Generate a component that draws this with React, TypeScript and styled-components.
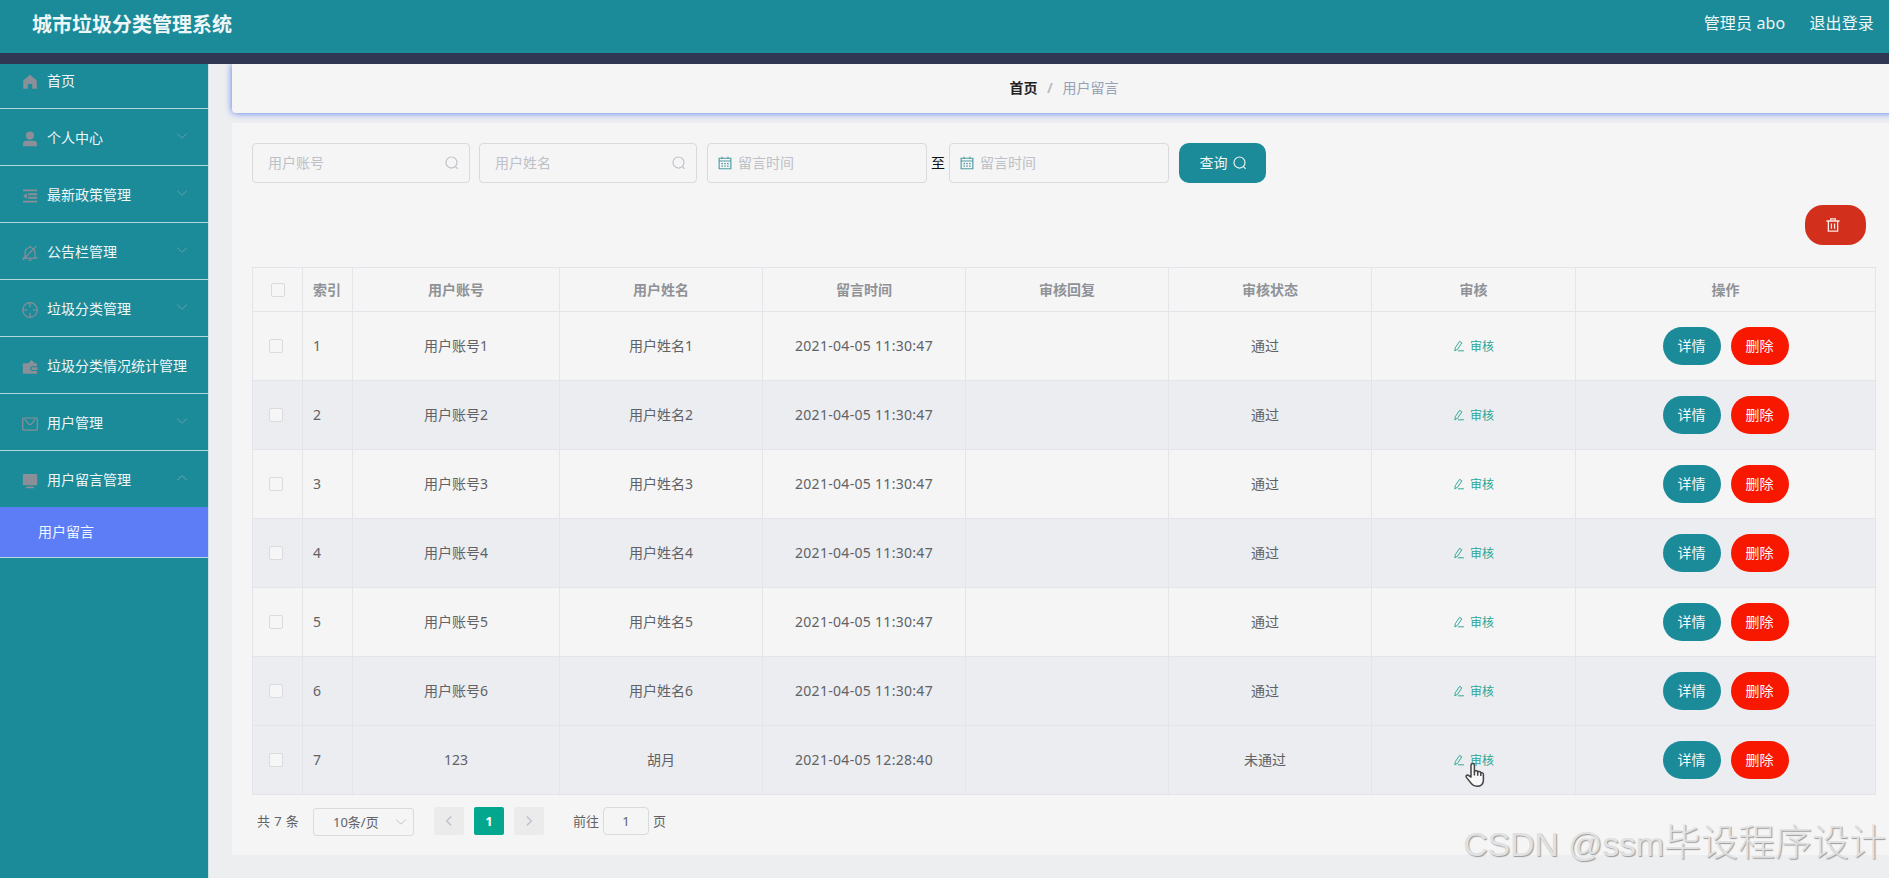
import React from "react";
import styled, { createGlobalStyle, css } from "styled-components";

const Global = createGlobalStyle`
  * { box-sizing: border-box; }
  body { margin: 0; overflow: hidden; background: #eceef0; }
  body, button, input { font-family: "Noto Sans", "Noto Sans CJK SC", sans-serif; font-size: 14px; }
`;

const Page = styled.div`
  position: relative;
  display: flex;
  flex-direction: column;
  width: 100%;
  height: 878px;
  overflow: hidden;
  color: #606266;
`;

const Header = styled.header`
  display: flex;
  flex: none;
  justify-content: space-between;
  height: 64px;
  padding: 0 15px 5px 32px;
  background: #1b8a99;
  border-bottom: 11px solid #303753;
  color: #eef7f8;
`;
const Title = styled.h1`
  margin: 0;
  font-size: 20px;
  font-weight: 700;
  line-height: 49px;
`;
const Account = styled.div`
  display: flex;
  gap: 24px;
  font-size: 16px;
  line-height: 46px;
  letter-spacing: 0.15px;
`;

const Body = styled.div`
  display: flex;
  flex: 1;
  min-height: 0;
  overflow: hidden;
`;
const Sidebar = styled.nav`
  flex: none;
  width: 209px;
  overflow: hidden;
  background: #1b8a99;
  border-right: 1px solid #cfe0e4;
`;
const Menu = styled.ul`
  margin: -12px 0 0;
  padding: 0;
  list-style: none;
`;
const MenuGroup = styled.li`
  border-bottom: 1px solid #b5d8dd;
`;
const MenuItem = styled.div`
  display: flex;
  align-items: center;
  height: 56px;
  padding: 0 20px 0 22px;
  color: #eef7f8;
  white-space: nowrap;
  > svg:first-child { flex: none; margin: 4px 9px 0 0; color: #8b8f97; }
`;
const Arrow = styled.svg`
  width: 12px;
  height: 12px;
  margin: -2px 0 0 auto;
  color: #519ba6;
`;
const SubItem = styled.div`
  height: 50px;
  padding-left: 38px;
  line-height: 49px;
  color: #f2f5ff;
  background: #5c7df5;
`;

const Main = styled.main`
  flex: 1;
  min-width: 0;
  padding-left: 23px;
`;
const Crumbs = styled.div`
  display: flex;
  justify-content: center;
  height: 49px;
  margin-right: -7px;
  line-height: 47px;
  border-radius: 0 0 4px 4px;
  background: #f5f5f5;
  box-shadow: 0 0 7px #5478f0;
  color: #97a2b6;
  b { color: #222; font-weight: 700; }
  span { margin: 0 9.5px; color: #b8bcc6; font-weight: 700; }
`;
const Card = styled.section`
  position: relative;
  height: 732px;
  margin-top: 10px;
  padding: 20px 13px 0 20px;
  background: #f5f5f5;
`;
const Filters = styled.div`
  display: flex;
  align-items: center;
  height: 40px;
`;
const Label = styled.span`
  padding-bottom: 2px;
`;
const Field = styled.div<{ $date?: boolean; $gap?: number }>`
  display: flex;
  align-items: center;
  justify-content: space-between;
  width: 218px;
  height: 40px;
  margin-right: ${(p) => p.$gap ?? 10}px;
  padding: 0 10px 0 15px;
  border: 1px solid #d8dadd;
  border-radius: 4px;
  color: #bcc0c8;
  ${(p) =>
    p.$date &&
    css`
      width: 220px;
      padding: 0 10px;
      justify-content: flex-start;
      gap: 6px;
      svg { color: #4d9ca5; }
    `}
`;
const Until = styled.span`
  width: 18px;
  padding-bottom: 2px;
  color: #111;
`;
const SearchButton = styled.button`
  display: flex;
  align-items: center;
  justify-content: center;
  gap: 5px;
  width: 87px;
  height: 40px;
  padding: 0 0 0 1px;
  border: 0;
  border-radius: 10px;
  color: #eef7f8;
  background: #1b8a99;
`;
const Toolbar = styled.div`
  display: flex;
  justify-content: flex-end;
  padding: 22px 10px;
`;
const BulkDelete = styled.button`
  display: flex;
  align-items: center;
  justify-content: center;
  width: 61px;
  height: 40px;
  padding: 0 5px 0 0;
  border: 0;
  border-radius: 18px;
  color: #fbe9e5;
  background: #d22f1d;
`;

const Table = styled.div`
  width: 1624px;
  border: solid #e3e5ea;
  border-width: 1px 0 0 1px;
`;
const Row = styled.div<{ $head?: boolean; $shade?: boolean }>`
  display: grid;
  grid-template-columns: 50px 50px 207px 203px 203px 203px 203px 204px 300px;
  height: ${(p) => (p.$head ? 44 : 69)}px;
  background: ${(p) => (p.$shade ? "#ebedf1" : "transparent")};
  ${(p) => p.$head && css`color: #8f9297; font-weight: 700;`}
`;
const Cell = styled.div<{ $left?: number; $shift?: number }>`
  display: flex;
  align-items: center;
  justify-content: ${(p) => (p.$left ? "flex-start" : "center")};
  padding-left: ${(p) => p.$left ?? 0}px;
  padding-right: ${(p) => p.$shift ?? 0}px;
  border: solid #e3e5ea;
  border-width: 0 1px 1px 0;
`;
const TextCell = styled(Cell)`
  padding-bottom: 2px;
`;
const Time = styled.span`
  letter-spacing: 0.3px;
`;
const Check = styled.span`
  width: 14px;
  height: 14px;
  border: 1px solid #d9dbdf;
  border-radius: 2px;
  background: #f6f6f6;
`;
const Audit = styled.a`
  display: flex;
  align-items: center;
  gap: 5px;
  padding-bottom: 1px;
  font-size: 12px;
  color: #2ba694;
`;
const Pill = styled.button<{ $danger?: boolean }>`
  width: 58px;
  height: 38px;
  margin: 0 5px;
  padding: 0 0 2px;
  border: 0;
  border-radius: 19px;
  color: #f8f8f8;
  background: ${(p) => (p.$danger ? "#f81800" : "#1b8a99")};
`;

const Pager = styled.div`
  display: flex;
  align-items: center;
  height: 28px;
  margin: 12px 0 0 5px;
  font-size: 13px;
`;
const Total = styled.span`
  width: 56px;
  padding-bottom: 1px;
  white-space: nowrap;
  word-spacing: 0.8px;
`;
const PageSize = styled.div`
  display: flex;
  align-items: center;
  justify-content: space-between;
  width: 101px;
  height: 28px;
  margin: 2px 20px 0 0;
  padding: 0 6px 2px 19px;
  border: 1px solid #d8dadd;
  border-radius: 3px;
  svg { color: #c0c4cc; margin-top: 2px; }
`;
const PageButton = styled.span<{ $active?: boolean }>`
  display: flex;
  align-items: center;
  justify-content: center;
  width: 30px;
  height: 28px;
  margin-right: 10px;
  border-radius: 2px;
  font-weight: 700;
  color: ${(p) => (p.$active ? "#fff" : "#bfc3ca")};
  background: ${(p) => (p.$active ? "#03a78d" : "#ebebec")};
`;
const Jump = styled.div`
  display: flex;
  align-items: center;
  margin-left: 19px;
`;
const JumpInput = styled.span`
  width: 46px;
  height: 28px;
  margin: 0 4px 0 4px;
  border: 1px solid #d8dadd;
  border-radius: 4px;
  line-height: 26px;
  text-align: center;
`;

const Watermark = styled.div`
  position: absolute;
  right: 3px;
  bottom: 7px;
  font: 300 37px/54px "Liberation Sans", "Noto Sans CJK SC", sans-serif;
  color: #e0e1e2;
  text-shadow: 1px 1px 1px #9a9a9a;
  white-space: nowrap;
`;
const Latin = styled.span`
  font-size: 34px;
  letter-spacing: -0.2px;
`;
const Pointer = styled.svg`
  position: absolute;
  left: 1465px;
  top: 762px;
`;

const iconPaths: Record<string, React.ReactNode> = {
  home: <path fill="currentColor" stroke="none" d="M8 .8 1.200 6.600v8.200h4.600V10h4.400v4.800h4.600V6.600z" />,
  user: (
    <g fill="currentColor" stroke="none">
      <circle cx="8" cy="4.6" r="4.1" />
      <path d="M1 15.2v-2.400a3 3 0 0 1 3-3h8a3 3 0 0 1 3 3v2.400z" />
    </g>
  ),
  fold: (
    <>
      <path strokeWidth="1.9" d="M1 2.400h14M6.200 6.200H15M6.200 9.800H15M1 13.600h14" />
      <path fill="currentColor" stroke="none" d="M4.800 5v6L1.200 8z" />
    </>
  ),
  bell: <path strokeWidth="1.2" d="M3 13V7.500a5 5 0 0 1 10 0V13M.5 13.200h15M6.400 15.200h3.200M8 .5v2M14.200 1.300 1 14.800" />,
  aim: (
    <g strokeWidth="1.200">
      <circle cx="8" cy="8" r="7.300" />
      <path d="M8 1v4.200M8 10.800V15M1 8h4.200M10.800 8H15" />
    </g>
  ),
  wallet: (
    <path
      fill="currentColor"
      stroke="none"
      d="M.8 4.200h5.400L9.700 1l2.800 3.200H15v3h-4.500a2.400 2.400 0 0 0 0 4.800H15v2.700H.8zM10.600 8.300H15.400v2.600h-4.800a1.300 1.300 0 0 1 0-2.600z"
    />
  ),
  mail: (
    <g strokeWidth="1.200">
      <rect x=".7" y="2" width="14.600" height="12.200" rx="1" />
      <path d="m2.800 3.200 3.600 4.600q1.600 1.500 3.200 0l3.600-4.600" />
    </g>
  ),
  monitor: <path fill="currentColor" stroke="none" d="M1.800 1h12.400q1 0 1 1v9.200q0 1-1 1H1.800q-1 0-1-1V2q0-1 1-1zM5 13.600h6l1.300.9v.8H3.700v-.8z" />,
  search: (
    <>
      <circle cx="7.4" cy="7.5" r="6.300" />
      <path d="m12 12.200 2.400 2.600" />
    </>
  ),
  calendar: (
    <>
      <path strokeWidth="1.300" d="M1.300 2.600h13.400v12H1.300zM1.300 5.700h13.400M4.600.8v2.600M11.400.8v2.600" />
      <path strokeDasharray="1.800 1.400" d="M3.900 8.700h8.600M3.900 11.500h8.600" />
    </>
  ),
  trash: <path strokeWidth="1.500" d="M.5 3.400h15M2.700 3.400v11.600h10.600V3.400M5.400 3.200V1h5.200v2.200M6.200 6.200v6M9.800 6.200v6" />,
  edit: <path strokeWidth="1.300" d="m3.200 10 5.600-8.200 3 2-5.800 8.600-3.600 2zM6.600 14.400H14.500" />,
  down: <path d="m1.500 4.800 6.500 6 6.500-6" />,
  up: <path d="m1.500 11 6.500-6 6.500 6" />,
  left: <path strokeWidth="2" d="M10.900 2 5 8l5.900 6" />,
  right: <path strokeWidth="2" d="M5.100 2 11 8l-5.900 6" />,
};

function Icon({ name, size = 14 }: { name: string; size?: number }) {
  return (
    <svg width={size} height={size} viewBox="0 0 16 16" fill="none" stroke="currentColor" strokeWidth="1.3">
      {iconPaths[name]}
    </svg>
  );
}

const menu = [
  { icon: "home", label: "首页" },
  { icon: "user", label: "个人中心", arrow: "down" },
  { icon: "fold", label: "最新政策管理", arrow: "down" },
  { icon: "bell", label: "公告栏管理", arrow: "down" },
  { icon: "aim", label: "垃圾分类管理", arrow: "down" },
  { icon: "wallet", label: "垃圾分类情况统计管理" },
  { icon: "mail", label: "用户管理", arrow: "down" },
  { icon: "monitor", label: "用户留言管理", arrow: "up", child: "用户留言" },
];

const columns = ["用户账号", "用户姓名", "留言时间", "审核回复", "审核状态", "审核", "操作"];

const rows = [
  ...[1, 2, 3, 4, 5, 6].map((n) => ({
    account: `用户账号${n}`,
    name: `用户姓名${n}`,
    time: "2021-04-05 11:30:47",
    status: "通过",
  })),
  { account: "123", name: "胡月", time: "2021-04-05 12:28:40", status: "未通过" },
];

export default function App() {
  return (
    <Page>
      <Global />
      <Header>
        <Title>城市垃圾分类管理系统</Title>
        <Account>
          <span>管理员 abo</span>
          <span>退出登录</span>
        </Account>
      </Header>
      <Body>
        <Sidebar>
          <Menu>
            {menu.map((m) => (
              <MenuGroup key={m.label}>
                <MenuItem>
                  <Icon name={m.icon} size={16} />
                  {m.label}
                  {m.arrow && (
                    <Arrow viewBox="0 0 16 16" fill="none" stroke="currentColor" strokeWidth="1.4">
                      {iconPaths[m.arrow]}
                    </Arrow>
                  )}
                </MenuItem>
                {m.child && <SubItem>{m.child}</SubItem>}
              </MenuGroup>
            ))}
          </Menu>
        </Sidebar>
        <Main>
          <Crumbs>
            <b>首页</b>
            <span>/</span>
            用户留言
          </Crumbs>
          <Card>
            <Filters>
              <Field $gap={9}><Label>用户账号</Label><Icon name="search" /></Field>
              <Field><Label>用户姓名</Label><Icon name="search" /></Field>
              <Field $date $gap={4}><Icon name="calendar" /><Label>留言时间</Label></Field>
              <Until>至</Until>
              <Field $date><Icon name="calendar" /><Label>留言时间</Label></Field>
              <SearchButton><Label>查询</Label><Icon name="search" /></SearchButton>
            </Filters>
            <Toolbar>
              <BulkDelete><Icon name="trash" /></BulkDelete>
            </Toolbar>
            <Table>
              <Row $head>
                <Cell $left={18}><Check /></Cell>
                <TextCell $left={10}>索引</TextCell>
                {columns.map((c) => (
                  <TextCell key={c}>{c}</TextCell>
                ))}
              </Row>
              {rows.map((r, i) => (
                <Row key={i} $shade={i % 2 === 1 || i === rows.length - 1}>
                  <Cell $left={16}><Check /></Cell>
                  <TextCell $left={10}>{i + 1}</TextCell>
                  <TextCell>{r.account}</TextCell>
                  <TextCell>{r.name}</TextCell>
                  <TextCell><Time>{r.time}</Time></TextCell>
                  <Cell />
                  <TextCell $shift={10}>{r.status}</TextCell>
                  <Cell><Audit><Icon name="edit" size={12} />审核</Audit></Cell>
                  <Cell>
                    <Pill>详情</Pill>
                    <Pill $danger>删除</Pill>
                  </Cell>
                </Row>
              ))}
            </Table>
            <Pager>
              <Total>共 7 条</Total>
              <PageSize>10条/页<Icon name="down" size={12} /></PageSize>
              <PageButton><Icon name="left" size={12} /></PageButton>
              <PageButton $active>1</PageButton>
              <PageButton><Icon name="right" size={12} /></PageButton>
              <Jump>
                <Label>前往</Label>
                <JumpInput>1</JumpInput>
                <Label>页</Label>
              </Jump>
            </Pager>
          </Card>
        </Main>
      </Body>
      <Pointer width="20" height="26" viewBox="0 0 20 26" fill="#f8f8f8" stroke="#444" strokeWidth="1.5" strokeLinejoin="round">
        <path d="M6 15V3.200a1.700 1.700 0 0 1 3.400 0V9q3-1 3.300.8 3-.7 3.100.9 2.600-.4 2.600 2v5.200q0 6.400-6.600 6.400-3.200 0-5.300-2.600L1.400 15.400q-1.100-2.400 1.600-2.300z" />
        <path fill="none" d="M9.400 9v4.500M12.700 9.800v4M15.800 10.700v3.300" />
      </Pointer>
      <Watermark><Latin>CSDN @ssm</Latin>毕设程序设计</Watermark>
    </Page>
  );
}
